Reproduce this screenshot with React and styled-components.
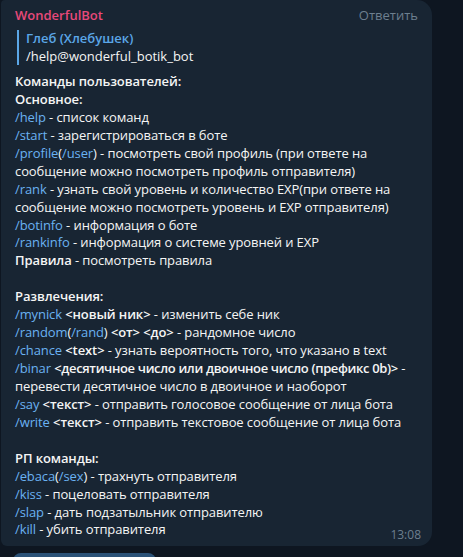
import React from "react";
import styled, { createGlobalStyle } from "styled-components";

const Global = createGlobalStyle`
  html, body { margin: 0; padding: 0; background: #0e1621; }
  body { font-family: "Open Sans", "Noto Sans", sans-serif; -webkit-font-smoothing: antialiased; }
`;

const Page = styled.div`
  width: 463px;
  height: 557px;
  overflow: hidden;
  background: #0e1621;
  padding-left: 1px;
  box-sizing: border-box;
`;

const Bubble = styled.div`
  position: relative;
  width: 431px;
  box-sizing: border-box;
  background: #182533;
  border-radius: 4px 15px 14px 6px;
  padding: 6px 14px 7px 14px;
  color: #f5f5f5;
  font-size: 13px;
`;

const Header = styled.div`
  display: flex;
  justify-content: space-between;
  align-items: center;
  line-height: 18px;
`;

const Name = styled.span`
  color: #e8497a;
  font-weight: 600;
`;

const ReplyAction = styled.span`
  color: #6d7f8f;
`;

const Reply = styled.div`
  margin: 6px 0 0 2px;
  border-left: 2px solid #5ba7e8;
  padding-left: 7px;
  line-height: 17.5px;
`;

const ReplyName = styled.div`
  color: #5ba7e8;
  font-weight: 600;
`;

const ReplyText = styled.div`
  color: #f5f5f5;
`;

const Body = styled.div`
  margin-top: 8px;
  line-height: 17.94px;
  letter-spacing: -0.1px;
`;

const Line = styled.div`
  white-space: nowrap;
  min-height: 17.94px;
`;

const Cmd = styled.span`
  color: #6ab2f2;
`;

const Bold = styled.span`
  font-weight: 600;
  letter-spacing: ${(p) => (p.$tight ? "-0.35px" : "-0.1px")};
`;

const Time = styled.span`
  position: absolute;
  right: 11px;
  bottom: 3px;
  font-size: 12px;
  line-height: 16px;
  color: #6d7f8f;
`;

const NextBubble = styled.div`
  margin: 7px 0 0 12px;
  width: 143px;
  height: 12px;
  border-radius: 8px 8px 0 0;
  background: #2b5278;
`;

const C = (v) => ({ k: "c", v });
const B = (v) => ({ k: "b", v });
const BT = (v) => ({ k: "bt", v });
const T = (v) => ({ k: "t", v });

const lines = [
  [B("Команды пользователей:")],
  [B("Основное:")],
  [C("/help"), T(" - список команд")],
  [C("/start"), T(" - зарегистрироваться в боте")],
  [C("/profile"), T("("), C("/user"), T(") - посмотреть свой профиль (при ответе на")],
  [T("сообщение можно посмотреть профиль отправителя)")],
  [C("/rank"), T(" - узнать свой уровень и количество EXP(при ответе на")],
  [T("сообщение можно посмотреть уровень и EXP отправителя)")],
  [C("/botinfo"), T(" - информация о боте")],
  [C("/rankinfo"), T(" - информация о системе уровней и EXP")],
  [B("Правила"), T(" - посмотреть правила")],
  [],
  [B("Развлечения:")],
  [C("/mynick"), T(" "), B("<новый ник>"), T(" - изменить себе ник")],
  [C("/random"), T("("), C("/rand"), T(") "), B("<от> <до>"), T(" - рандомное число")],
  [C("/chance"), T(" "), B("<text>"), T(" - узнать вероятность того, что указано в text")],
  [C("/binar"), T(" "), BT("<десятичное число или двоичное число (префикс 0b)>"), T(" -")],
  [T("перевести десятичное число в двоичное и наоборот")],
  [C("/say"), T(" "), B("<текст>"), T(" - отправить голосовое сообщение от лица бота")],
  [C("/write"), T(" "), B("<текст>"), T(" - отправить текстовое сообщение от лица бота")],
  [],
  [B("РП команды:")],
  [C("/ebaca"), T("("), C("/sex"), T(") - трахнуть отправителя")],
  [C("/kiss"), T(" - поцеловать отправителя")],
  [C("/slap"), T(" - дать подзатыльник отправителю")],
  [C("/kill"), T(" - убить отправителя")],
];

const Seg = ({ s }) => {
  if (s.k === "c") return <Cmd>{s.v}</Cmd>;
  if (s.k === "b") return <Bold>{s.v}</Bold>;
  if (s.k === "bt") return <Bold $tight>{s.v}</Bold>;
  return <>{s.v}</>;
};

export default function App() {
  return (
    <Page>
      <Global />
      <Bubble>
        <Header>
          <Name>WonderfulBot</Name>
          <ReplyAction>Ответить</ReplyAction>
        </Header>
        <Reply>
          <ReplyName>Глеб (Хлебушек)</ReplyName>
          <ReplyText>/help@wonderful_botik_bot</ReplyText>
        </Reply>
        <Body>
          {lines.map((l, i) => (
            <Line key={i}>
              {l.map((s, j) => (
                <Seg key={j} s={s} />
              ))}
            </Line>
          ))}
        </Body>
        <Time>13:08</Time>
      </Bubble>
      <NextBubble />
    </Page>
  );
}
